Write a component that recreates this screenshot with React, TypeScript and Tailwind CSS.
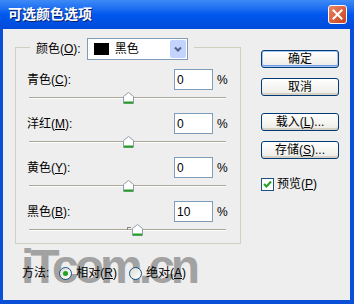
import React from "react";

const FONT = { fontFamily: '"Liberation Sans", "Noto Sans CJK SC", sans-serif' };

// 滑块的小三角
function Thumb({ pos }: { pos: number }) {
  return (
    <svg
      width="11"
      height="12"
      viewBox="0 0 11 12"
      className="absolute top-0"
      style={{ left: `calc(${pos}% - 5px)` }}
    >
      <path d="M0.5 4.5 L5.5 0.5 L10.5 4.5 L10.5 11.5 L0.5 11.5 Z" fill="#fff" stroke="#8f9da8" />
      <rect x="1" y="9.5" width="9" height="2" fill="#21a121" />
    </svg>
  );
}

function Slider({ pos, mark }: { pos: number; mark?: boolean }) {
  return (
    <div className="relative ml-[13px] mt-[2px] h-[12px] w-[197px]">
      <div className="absolute left-0 right-0 top-[5px] h-[1px] bg-[#aca899]" />
      <div className="absolute left-0 right-0 top-[6px] h-[1px] bg-[#fdfdfd]" />
      {mark && <div className="absolute left-[98px] top-[3px] h-[3px] w-[4px] border-l border-t border-[#8a8677]" />}
      <Thumb pos={pos} />
    </div>
  );
}

function Row({ label, hot, value, pos, mark }: { label: string; hot: string; value: string; pos: number; mark?: boolean }) {
  return (
    <div className="mt-[9px]">
      <div className="flex items-center">
        <span className="ml-[11px] w-[147px] text-[12px] text-black">
          {label}(<span className="underline">{hot}</span>):
        </span>
        <div className="flex h-[21px] w-[39px] items-center border border-[#7f9db9] bg-white pl-[2px] text-[12px]">{value}</div>
        <span className="ml-[4px] text-[12px]">%</span>
      </div>
      <Slider pos={pos} mark={mark} />
    </div>
  );
}

function Btn({ children, primary }: { children: React.ReactNode; primary?: boolean }) {
  return (
    <div
      className={`flex h-[18px] w-[78px] items-center justify-center rounded-[3px] border border-[#003c74] bg-gradient-to-b from-white to-[#ecebe6] text-[12px] text-black ${
        primary ? "shadow-[inset_0_0_0_1px_#a9c3f2,inset_0_-1px_0_1px_#6e9be6]" : "shadow-[inset_0_-2px_0_#d6d0c5]"
      }`}
    >
      {children}
    </div>
  );
}

export default function App() {
  return (
    <div className="relative flex h-[304px] w-[354px] flex-col overflow-hidden bg-[#0a4fd8]" style={FONT}>
      {/* 标题栏 */}
      <div className="flex h-[29px] items-center justify-between bg-gradient-to-b from-[#3d8af7] via-[#0058ee] to-[#004ad9] pl-[8px] pr-[7px]">
        <span className="text-[14px] font-bold text-white" style={{ textShadow: "1px 1px #0a1f6e" }}>
          可选颜色选项
        </span>
        <div className="flex h-[19px] w-[19px] items-center justify-center rounded-[3px] border border-white bg-gradient-to-br from-[#ec8462] to-[#c8411a]">
          <svg width="11" height="11" viewBox="0 0 11 11">
            <path d="M1.5 1.5 L9.5 9.5 M9.5 1.5 L1.5 9.5" stroke="#fff" strokeWidth="2" strokeLinecap="square" />
          </svg>
        </div>
      </div>

      {/* 主体 */}
      <div className="relative mb-[4px] ml-[3px] mr-[4px] flex flex-1 bg-[#eeeeee] pl-[12px] pt-[18px]">
        {/* 水印 */}
        <div
          className="pointer-events-none absolute left-[18px] top-[214px] text-[48px] font-bold leading-none tracking-[-4px] text-[#a2a2a2]"
          style={{ fontFamily: '"Liberation Sans", sans-serif' }}
        >
          iTcom.cn
        </div>

        <div className="relative flex flex-col">
          <div className="h-[197px] w-[226px] border border-[#d0d0bf]">
            <div className="-mt-[10px] ml-[14px] flex h-[22px] w-fit items-center bg-[#eeeeee] px-[6px]">
              <span className="text-[12px]">
                颜色(<span className="underline">O</span>):
              </span>
              <div className="ml-[6px] flex h-[22px] w-[101px] items-center border border-[#7f9db9] bg-white pl-[6px]">
                <div className="h-[12px] w-[15px] bg-black" />
                <span className="ml-[6px] text-[12px]">黑色</span>
                <div className="ml-auto mr-[1px] flex h-[18px] w-[16px] items-center justify-center rounded-[2px] bg-[#c3d3fd]">
                  <svg width="8" height="6" viewBox="0 0 8 6">
                    <path d="M1 1.5 L4 4.5 L7 1.5" stroke="#4d6185" strokeWidth="2" fill="none" />
                  </svg>
                </div>
              </div>
            </div>
            <Row label="青色" hot="C" value="0" pos={50} />
            <Row label="洋红" hot="M" value="0" pos={50} />
            <Row label="黄色" hot="Y" value="0" pos={50} />
            <Row label="黑色" hot="B" value="10" pos={55} mark />
          </div>

          {/* 方法 */}
          <div className="ml-[7px] mt-[20px] flex items-center text-[12px]">
            <span>方法:</span>
            <div className="ml-[10px] flex h-[13px] w-[13px] items-center justify-center rounded-full border border-[#1c5180] bg-gradient-to-br from-[#dcdcd4] to-white">
              <div className="h-[5px] w-[5px] rounded-full bg-[#21a121]" />
            </div>
            <span className="ml-[4px]">
              相对(<span className="underline">R</span>)
            </span>
            <div className="ml-[12px] h-[13px] w-[13px] rounded-full border border-[#1c5180] bg-gradient-to-br from-[#dcdcd4] to-white" />
            <span className="ml-[4px]">
              绝对(<span className="underline">A</span>)
            </span>
          </div>
        </div>

        {/* 按钮 */}
        <div className="ml-[20px] flex flex-col pt-[3px]">
          <Btn primary>确定</Btn>
          <div className="mt-[10px]">
            <Btn>取消</Btn>
          </div>
          <div className="mt-[17px]">
            <Btn>
              载入(<span className="underline">L</span>)...
            </Btn>
          </div>
          <div className="mt-[10px]">
            <Btn>
              存储(<span className="underline">S</span>)...
            </Btn>
          </div>
          <div className="mt-[16px] flex items-center text-[12px]">
            <div className="flex h-[13px] w-[13px] items-center justify-center border border-[#1c5180] bg-white">
              <svg width="9" height="9" viewBox="0 0 9 9">
                <path d="M1 4 L3.5 6.5 L8 1.5" stroke="#21a121" strokeWidth="2" fill="none" />
              </svg>
            </div>
            <span className="ml-[3px]">
              预览(<span className="underline">P</span>)
            </span>
          </div>
        </div>
      </div>
    </div>
  );
}
